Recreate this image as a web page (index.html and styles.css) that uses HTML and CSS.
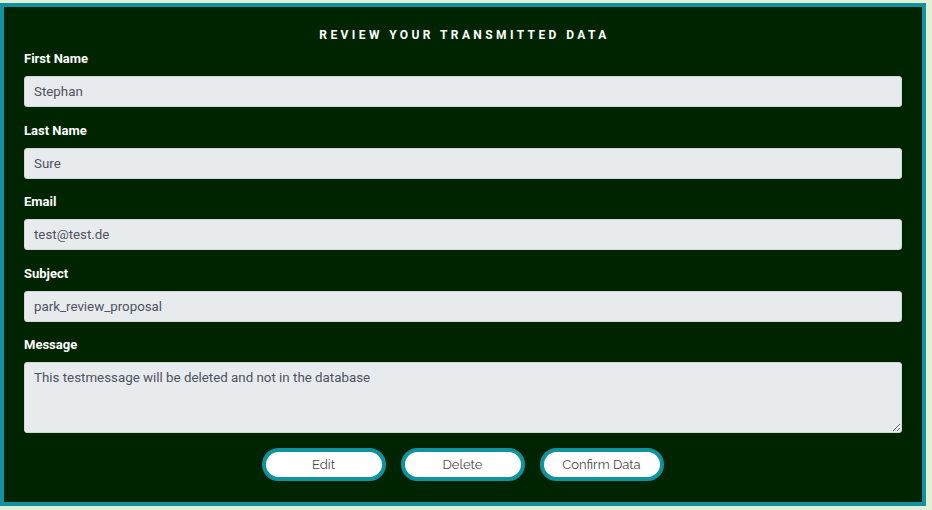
FILE: index.html
```html
<!DOCTYPE html>
<html lang="en">
<head>
<meta charset="utf-8">
<title>Review your transmitted data</title>
<link rel="stylesheet" href="styles.css">
</head>
<body>
<div class="review">
  <h1 class="review-title">REVIEW YOUR TRANSMITTED DATA</h1>
  <div class="field">
    <label class="field-label">First Name</label>
    <input class="field-input" type="text" value="Stephan" readonly>
  </div>
  <div class="field">
    <label class="field-label">Last Name</label>
    <input class="field-input" type="text" value="Sure" readonly>
  </div>
  <div class="field">
    <label class="field-label">Email</label>
    <input class="field-input" type="text" value="test@test.de" readonly>
  </div>
  <div class="field">
    <label class="field-label">Subject</label>
    <input class="field-input" type="text" value="park_review_proposal" readonly>
  </div>
  <div class="field field-last">
    <label class="field-label">Message</label>
    <textarea class="field-input field-textarea" readonly>This testmessage will be deleted and not in the database</textarea>
  </div>
  <div class="actions">
    <button class="btn" type="button">Edit</button>
    <button class="btn" type="button">Delete</button>
    <button class="btn" type="button">Confirm Data</button>
  </div>
</div>
</body>
</html>
```
FILE: styles.css
```css
html, body {
  margin: 0;
  padding: 0;
}
body {
  background: #e2f1d6;
  padding-top: 3px;
  font-family: Roboto, "Liberation Sans", sans-serif;
}
.review {
  box-sizing: border-box;
  width: 926px;
  height: 503px;
  background: #002400;
  border: 4px solid #1093a0;
  padding: 20px 20px 0 20px;
}
.review-title {
  margin: 0 0 8px 0;
  text-align: center;
  color: #ffffff;
  font-size: 12px;
  font-weight: 700;
  letter-spacing: 3.4px;
  line-height: 16px;
  padding-left: 3px;
}
.field {
  display: flex;
  flex-direction: column;
  margin-bottom: 15.6px;
}
.field-last {
  margin-bottom: 15px;
}
.field-label {
  color: #ffffff;
  font-size: 13px;
  font-weight: 700;
  line-height: 16px;
  margin-bottom: 9px;
}
.field-input {
  box-sizing: border-box;
  width: 878px;
  height: 31px;
  background: #e8ebee;
  border: 1px solid #d3d6da;
  border-radius: 3px;
  padding: 0 9px;
  font-family: Roboto, "Liberation Sans", sans-serif;
  font-size: 13.333px;
  color: #4d5260;
  outline: none;
}
.field-textarea {
  height: 71px;
  padding: 7px 9px;
  line-height: 16px;
  resize: both;
}
.actions {
  display: flex;
  justify-content: center;
  gap: 15px;
  padding-right: 1px;
}
.btn {
  box-sizing: border-box;
  width: 124px;
  height: 33px;
  background: #ffffff;
  border: 4px solid #1093a0;
  border-radius: 17px;
  font-family: Raleway, "Open Sans", sans-serif;
  font-size: 13px;
  color: #4a4a4a;
  padding: 0;
  cursor: pointer;
}
```
